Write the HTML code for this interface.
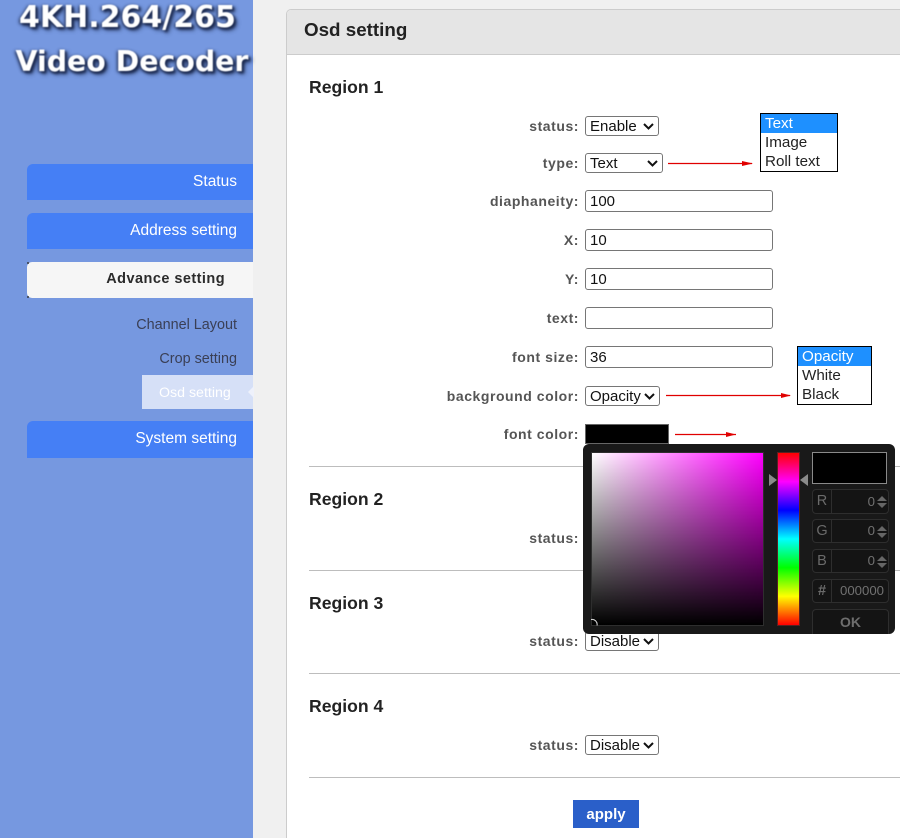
<!DOCTYPE html>
<html><head><meta charset="utf-8">
<style>
html,body{margin:0;padding:0;width:900px;height:838px;overflow:hidden;background:#f0f0f0;font-family:"Liberation Sans",Arial,sans-serif}
div,span{position:absolute;box-sizing:border-box;white-space:nowrap}
#clip{left:0;top:0;width:900px;height:838px;overflow:hidden;background:#f0f0f0}
.logo{font-family:"DejaVu Sans",sans-serif;font-weight:bold;color:#fff;text-shadow:2px 2px 2px #1c2a50,-1px 1px 3px #1c2a50,3px 3px 4px #33456f;filter:blur(.4px)}
.nav{left:27px;width:226px;height:36px;background:#457ff5;border-radius:6px 0 0 0;color:#fff;font-size:15.5px;line-height:35px;text-align:right;padding-right:16px}
.sub{left:27px;width:210px;text-align:right;font-size:14.4px;color:#3a3f55;line-height:18px}
.lb{right:321px;font-weight:bold;font-size:14px;letter-spacing:.55px;color:#555;line-height:18px;text-align:right}
.h{left:309px;font-weight:bold;font-size:17.6px;color:#222;line-height:22px}
.hr{left:309px;width:591px;height:1px;background:#bdbdbd}
.sel{left:585px;height:20px;background:#fff;border:1px solid #767676;border-radius:3px;font-size:15px;line-height:20px;color:#111;padding-left:4px}
.sel svg{position:absolute;top:6px}
.inp{left:585px;width:188px;height:22px;background:#fff;border:1px solid #767676;border-radius:3px;font-size:15px;line-height:22px;color:#111;padding-left:4px}
.list{background:#fff;border:1px solid #000;font-size:15.2px;line-height:19px;color:#222}
.list div{position:static;padding-left:4px;height:19px}
.list .on{background:#1e90ff;color:#fff}
.box{left:812px;width:77px;background:#141414;border:1px solid #2e2e2e;border-radius:4px;color:#6e6e6e;font-size:14px}
.box .k{left:0;top:0;bottom:0;width:19px;border-right:1px solid #2e2e2e;text-align:center;line-height:22px;font-size:14.5px;color:#6a6a6a}
.box .v{right:13px;top:0;line-height:22px;color:#717171;font-size:13.2px}
.up{right:1px;top:6px;width:0;height:0;border-left:5px solid transparent;border-right:5px solid transparent;border-bottom:5px solid #666}
.dn{right:1px;top:13px;width:0;height:0;border-left:5px solid transparent;border-right:5px solid transparent;border-top:5px solid #666}
</style></head><body>
<div id="clip">

<div style="left:0;top:0;width:253px;height:838px;background:#7698e0"></div>
<div class="logo" style="left:19px;top:-1px;font-size:30px;line-height:38px">4KH.264/265</div>
<div class="logo" style="left:15.5px;top:43px;font-size:28.4px;line-height:38px">Video Decoder</div>

<div class="nav" style="top:164px">Status</div>
<div class="nav" style="top:213px">Address setting</div>
<div class="nav" style="top:262px;background:#f6f6f6;color:#2b2b2b;font-weight:bold;padding-right:28px;border-radius:5px 0 0 5px;font-size:14.5px;letter-spacing:.45px">Advance setting</div>
<div style="left:27px;top:262px;width:2px;height:2px;background:#333;opacity:.7"></div>
<div style="left:27px;top:296px;width:2px;height:2px;background:#333;opacity:.7"></div>
<div class="sub" style="top:316px">Channel Layout</div>
<div class="sub" style="top:350px">Crop setting</div>
<div style="left:142px;top:375px;width:111px;height:34px;background:#d6e0f7"></div>
<div style="left:159px;top:384px;font-size:14.2px;line-height:18px;color:#fff">Osd setting</div>
<div style="left:248px;top:386px;width:0;height:0;border-top:6px solid transparent;border-bottom:6px solid transparent;border-right:6px solid #eef1fb"></div>
<div class="nav" style="top:421px;height:37px">System setting</div>

<div style="left:286px;top:9px;width:640px;height:840px;background:#fff;border:1px solid #ccc;border-radius:5px 0 0 0"></div>
<div style="left:287px;top:10px;width:613px;height:45px;background:#e5e5e5;border-bottom:1px solid #ccc;border-radius:4px 0 0 0"></div>
<div style="left:304px;top:18px;font-weight:bold;font-size:18.8px;line-height:24px;color:#222">Osd setting</div>

<div class="h" style="top:76px">Region 1</div>
<div class="lb" style="top:117px">status:</div>
<div class="sel" style="top:116px;width:74px">Enable<svg style="left:57px" width="11" height="7" viewBox="0 0 11 7"><path d="M1 1l4.500 4.500L10 1" fill="none" stroke="#111" stroke-width="2"/></svg></div>
<div class="lb" style="top:154px">type:</div>
<div class="sel" style="top:153px;width:78px">Text<svg style="left:61px" width="11" height="7" viewBox="0 0 11 7"><path d="M1 1l4.500 4.500L10 1" fill="none" stroke="#111" stroke-width="2"/></svg></div>
<div class="lb" style="top:192px">diaphaneity:</div>
<div class="inp" style="top:190px">100</div>
<div class="lb" style="top:231px">X:</div>
<div class="inp" style="top:229px">10</div>
<div class="lb" style="top:270px">Y:</div>
<div class="inp" style="top:268px">10</div>
<div class="lb" style="top:309px">text:</div>
<div class="inp" style="top:307px"></div>
<div class="lb" style="top:348px">font size:</div>
<div class="inp" style="top:346px">36</div>
<div class="lb" style="top:387px">background color:</div>
<div class="sel" style="top:386px;width:75px">Opacity<svg style="left:58px" width="11" height="7" viewBox="0 0 11 7"><path d="M1 1l4.500 4.500L10 1" fill="none" stroke="#111" stroke-width="2"/></svg></div>
<div class="lb" style="top:425px">font color:</div>
<div style="left:585px;top:424px;width:84px;height:20px;background:#000;border:1px solid #666"></div>

<svg style="position:absolute;left:660px;top:155px" width="100" height="18"><path d="M8 8.500H92" stroke="#e00000" stroke-width="1.200"/><path d="M82 6L93 8.500L82 11Z" fill="#e00000"/></svg>
<svg style="position:absolute;left:660px;top:387px" width="140" height="18"><path d="M6 8.500H130" stroke="#e00000" stroke-width="1.200"/><path d="M121 6L131 8.500L121 11Z" fill="#e00000"/></svg>
<svg style="position:absolute;left:670px;top:426px" width="70" height="18"><path d="M5 8.500H66" stroke="#e00000" stroke-width="1.200"/><path d="M56 6L66 8.500L56 11Z" fill="#e00000"/></svg>

<div class="list" style="left:760px;top:113px;width:78px;height:59px"><div class="on">Text</div><div>Image</div><div>Roll text</div></div>
<div class="list" style="left:797px;top:346px;width:75px;height:59px"><div class="on">Opacity</div><div>White</div><div>Black</div></div>

<div class="hr" style="top:466px"></div>
<div class="h" style="top:488px">Region 2</div>
<div class="lb" style="top:529px">status:</div>
<div class="hr" style="top:570px"></div>
<div class="h" style="top:592px">Region 3</div>
<div class="lb" style="top:632px">status:</div>
<div class="sel" style="top:631px;width:74px">Disable<svg style="left:57px" width="11" height="7" viewBox="0 0 11 7"><path d="M1 1l4.500 4.500L10 1" fill="none" stroke="#111" stroke-width="2"/></svg></div>
<div class="hr" style="top:673px"></div>
<div class="h" style="top:695px">Region 4</div>
<div class="lb" style="top:736px">status:</div>
<div class="sel" style="top:735px;width:74px">Disable<svg style="left:57px" width="11" height="7" viewBox="0 0 11 7"><path d="M1 1l4.500 4.500L10 1" fill="none" stroke="#111" stroke-width="2"/></svg></div>
<div class="hr" style="top:777px"></div>
<div style="left:573px;top:800px;width:66px;height:28px;background:#2a5fc9;color:#fff;font-weight:bold;font-size:15px;line-height:30px;text-align:center">apply</div>

<div style="left:583px;top:444px;width:312px;height:190px;background:#191919;border-radius:6px"></div>
<div style="left:591px;top:452px;width:173px;height:174px;background:linear-gradient(to top,#000,rgba(0,0,0,0)),linear-gradient(to right,#fff,#f0f);border:1px solid #2e2e2e"></div>
<svg style="position:absolute;left:591px;top:617px" width="12" height="9"><path d="M0 2.500A5 5 0 0 1 6 8.500" fill="none" stroke="#ddd" stroke-width="1"/></svg>
<div style="left:777px;top:452px;width:23px;height:174px;border:1px solid #5a2020;background:linear-gradient(to bottom,#f00 0%,#f0f 16.700%,#00f 33.300%,#0ff 50%,#0f0 66.700%,#ff0 83.300%,#f00 100%)"></div>
<div style="left:769px;top:474px;width:0;height:0;border-top:6.500px solid transparent;border-bottom:6.500px solid transparent;border-left:8px solid #8a8a8a"></div>
<div style="left:800px;top:474px;width:0;height:0;border-top:6.500px solid transparent;border-bottom:6.500px solid transparent;border-right:8px solid #8a8a8a"></div>
<div style="left:812px;top:452px;width:75px;height:32px;background:#000;border:1px solid #8a8a8a"></div>

<div class="box" style="top:489px;height:25px"><div class="k">R</div><div class="v" style="line-height:23px">0</div><div class="up"></div><div class="dn"></div></div>
<div class="box" style="top:519px;height:24px"><div class="k">G</div><div class="v">0</div><div class="up"></div><div class="dn"></div></div>
<div class="box" style="top:549px;height:24px"><div class="k">B</div><div class="v">0</div><div class="up"></div><div class="dn"></div></div>
<div class="box" style="top:579px;height:24px"><div class="k" style="font-weight:bold">#</div><div class="v" style="right:4px">000000</div></div>
<div class="box" style="top:609px;height:25px;border-bottom:0;border-radius:4px 4px 0 0;text-align:center;font-weight:bold;font-size:14px;line-height:24px;color:#6e6e6e"><span style="position:static">OK</span></div>
</div>
</body></html>
